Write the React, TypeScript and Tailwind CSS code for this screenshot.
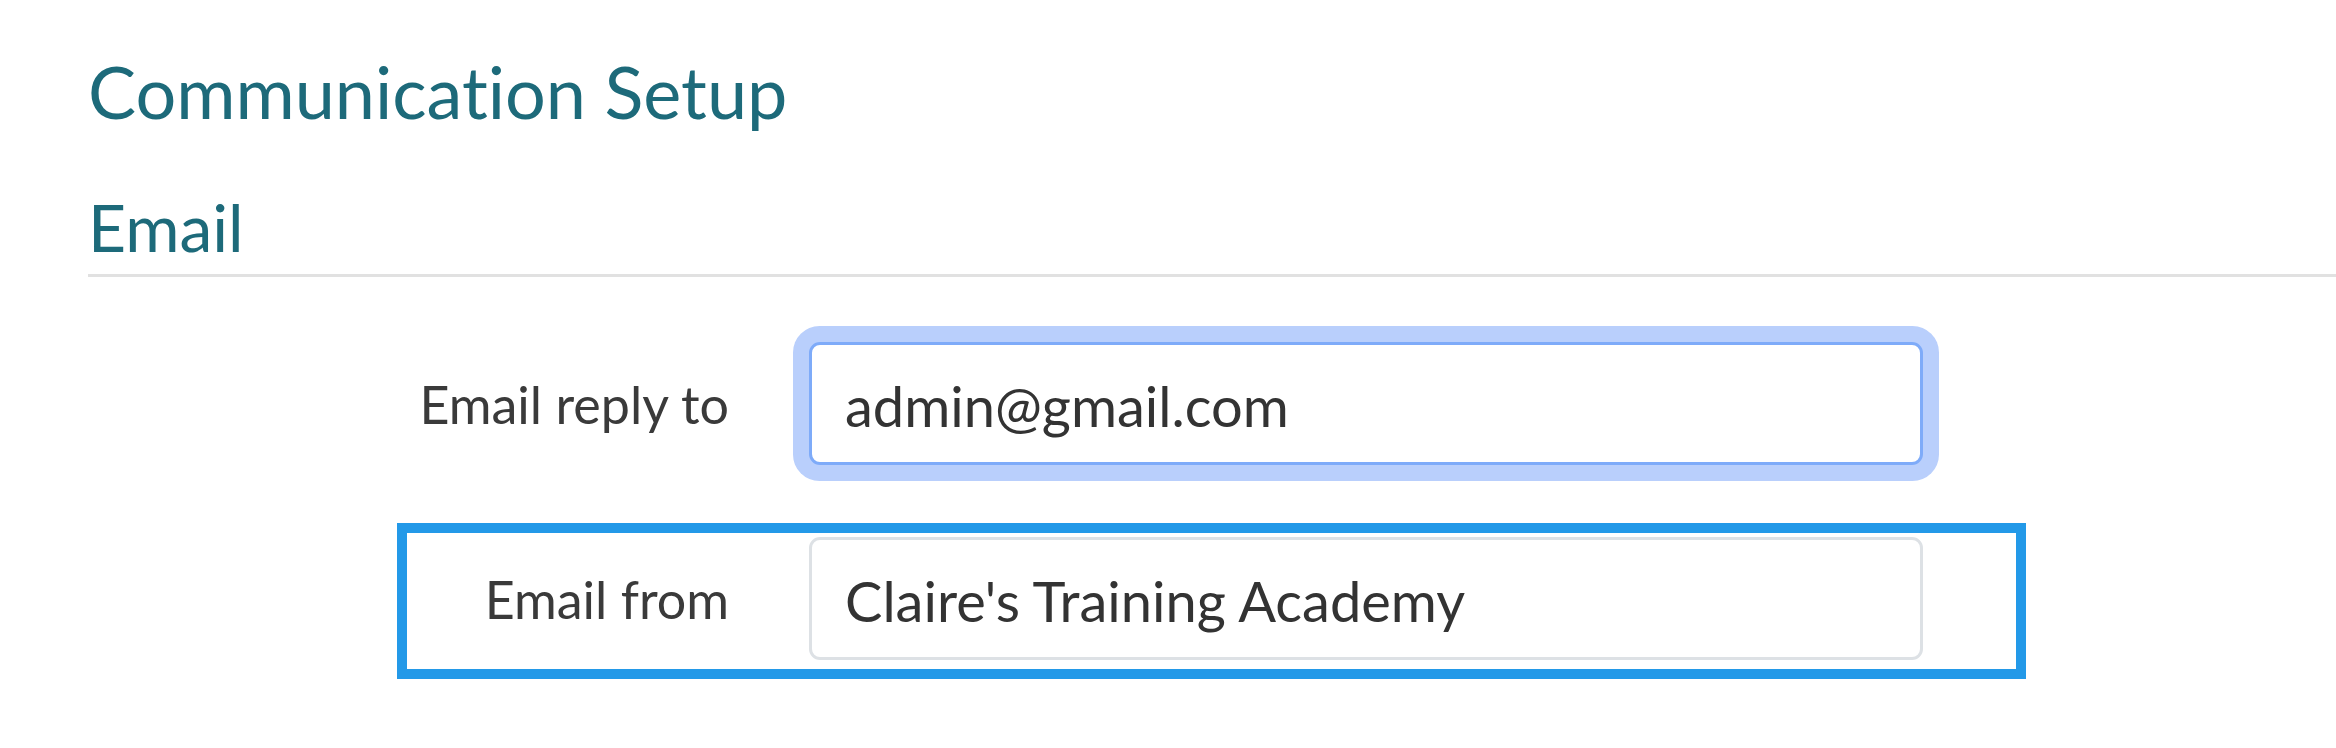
import React from "react";

const font = { fontFamily: "Lato, 'Noto Sans', sans-serif" };

function Row({
  label,
  value,
  focused,
  highlighted,
}: {
  label: string;
  value: string;
  focused?: boolean;
  highlighted?: boolean;
}) {
  return (
    <div
      className={
        "ml-[309px] flex w-[1629px] items-center border-[10px] pt-[4px] pb-[9px] " +
        (highlighted ? "border-[#2399e8]" : "border-transparent")
      }
    >
      <label className="w-[322px] shrink-0 text-right text-[52px] leading-none text-[#3a3a3a]">
        {label}
      </label>
      <input
        readOnly
        defaultValue={value}
        className={
          "ml-[80px] h-[123px] w-[1114px] shrink-0 rounded-[11px] border-[3px] bg-white pl-[33px] pt-[3px] text-[56px] leading-none text-[#333333] outline-none [font-variant-ligatures:none] " +
          (focused
            ? "border-[#7eabf9] shadow-[0_0_0_16px_#b9cffc]"
            : "border-[#dde1e5]")
        }
        style={font}
      />
    </div>
  );
}

export default function App() {
  return (
    <div
      className="min-h-[748px] w-full bg-white pl-[88px] pt-[55px] [font-variant-ligatures:none]"
      style={font}
    >
      <h1 className="text-[72px] font-normal leading-none text-[#1d6a7a]">
        Communication Setup
      </h1>
      <h2 className="mt-[67px] text-[66px] font-normal leading-none text-[#1d6a7a]">
        Email
      </h2>
      <div className="mt-[14px] h-[3px] w-full bg-[#e1e1e1]" />
      <div className="mt-[51px] flex flex-col gap-[39px]">
        <Row label="Email reply to" value="admin@gmail.com" focused />
        <Row label="Email from" value="Claire's Training Academy" highlighted />
      </div>
    </div>
  );
}
